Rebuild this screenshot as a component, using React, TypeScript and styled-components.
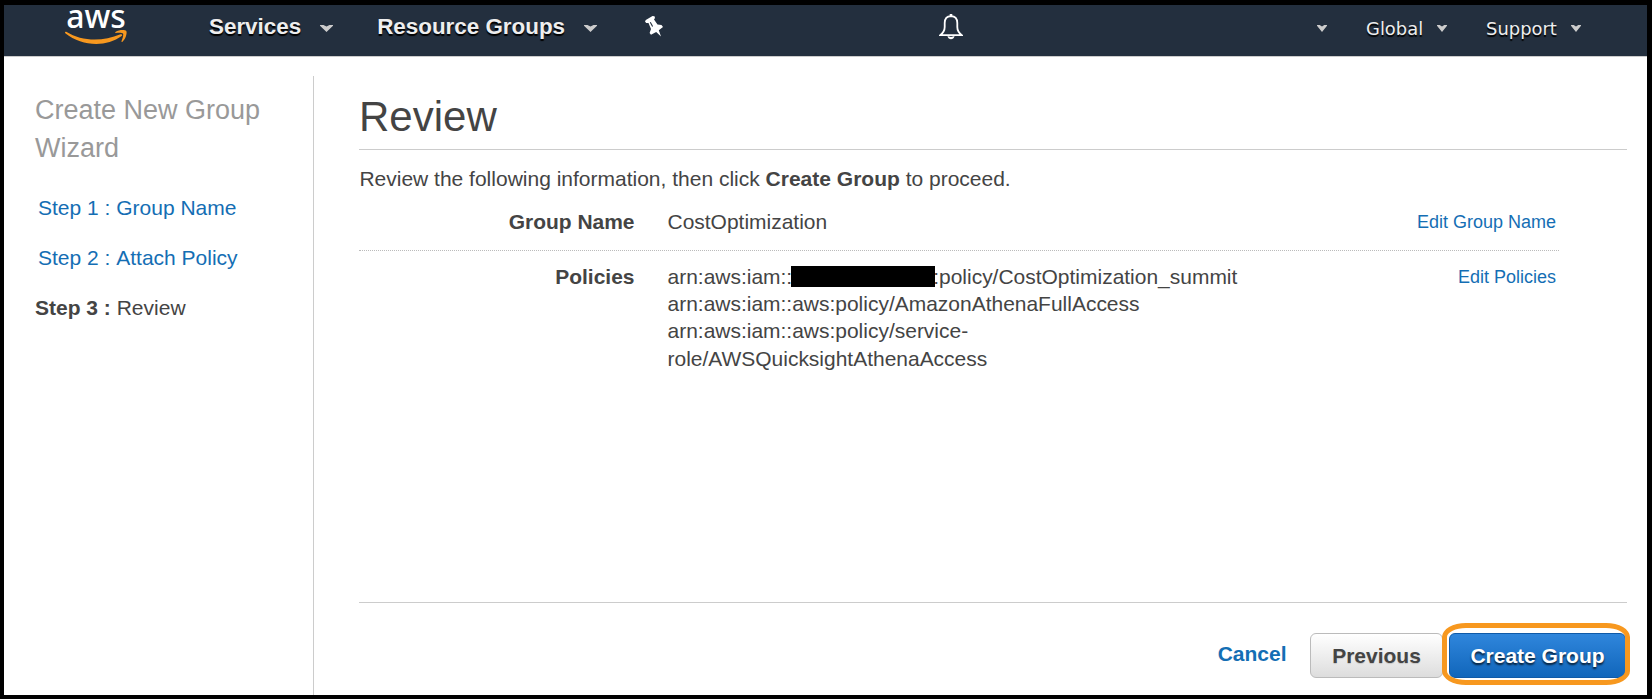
import React from 'react';
import styled, { createGlobalStyle } from 'styled-components';

const Global = createGlobalStyle`
  * { box-sizing: border-box; }
  body { margin: 0; background: #fff; color: #444; font-family: "Liberation Sans", Arial, sans-serif; }
  h1, h2, p, ul { margin: 0; padding: 0; font-weight: normal; }
  ul { list-style: none; }
`;

const Window = styled.div`
  width: 1652px;
  height: 699px;
  border: solid #000;
  border-width: 5px 5px 4px 4px;
  display: flex;
  flex-direction: column;
  background: #fff;
`;

const NavBar = styled.header`
  height: 52px;
  flex: none;
  display: flex;
  align-items: flex-start;
  background: #232f3e;
  border-bottom: 1px solid #ccc;
`;

const Logo = styled.div`
  width: 64px;
  height: 40px;
  margin-left: 60px;
  display: flex;
  flex-direction: column;
  align-items: center;
`;

const LogoText = styled.span`
  height: 25px;
  font: 500 32px/21px "Noto Sans", sans-serif;
  color: #fff;
  white-space: nowrap;
`;

const Smile = styled.svg`
  display: block;
  width: 64px;
  height: 15px;
`;

const NavItem = styled.a<{ $gap: number }>`
  display: flex;
  margin-left: ${(p) => p.$gap}px;
  font-size: 22.4px;
  font-weight: bold;
  line-height: 43px;
  color: #eee;
  text-shadow: 0 2px 1px #000;
  white-space: nowrap;
`;

const MetaItem = styled(NavItem)`
  font-family: "DejaVu Sans", sans-serif;
  font-weight: normal;
  font-size: 17.9px;
  line-height: 47px;
`;

const Caret = styled.svg<{ $w: number; $gap: number }>`
  width: ${(p) => p.$w}px;
  height: 7px;
  margin: 20px 0 0 ${(p) => p.$gap}px;
  fill: #ccc;
`;

const NavIcon = styled.svg<{ $gap: number; $top: number }>`
  flex: none;
  margin: ${(p) => p.$top}px 0 0 ${(p) => p.$gap}px;
`;

const Body = styled.div`
  flex: 1;
  display: flex;
  padding-top: 19px;
`;

const Sidebar = styled.aside`
  width: 310px;
  border-right: 1px solid #ccc;
  padding: 15px 0 0 31px;
`;

const WizardTitle = styled.h2`
  width: 240px;
  font-size: 27px;
  line-height: 38px;
  color: #999;
`;

const Steps = styled.ul`
  margin-top: 16px;
`;

const Step = styled.li<{ $active?: boolean }>`
  height: 50px;
  padding-left: ${(p) => (p.$active ? 0 : 3)}px;
  font-size: 21px;
  font-kerning: none;
  line-height: 50px;
  color: ${(p) => (p.$active ? '#444' : '#146eb4')};
`;

const Main = styled.main`
  width: 1268px;
  margin-left: 45px;
  display: flex;
  flex-direction: column;
`;

const Title = styled.h1`
  height: 74px;
  border-bottom: 1px solid #ccc;
  font-size: 42px;
  line-height: 81px;
`;

const Intro = styled.p`
  height: 50px;
  padding-left: 0.4px;
  font-size: 21px;
  line-height: 57px;
`;

const Row = styled.div<{ $line?: boolean }>`
  width: 1200px;
  display: flex;
  padding: ${(p) => (p.$line ? '8px 3px 15.3px 0' : '12px 3px 0 0')};
  border-bottom: ${(p) => (p.$line ? '1px dotted #bbb' : '0')};
  font-size: 20.98px;
  line-height: 27px;
`;

const Label = styled.div`
  width: 275.5px;
  text-align: right;
  font-weight: bold;
`;

const Value = styled.div`
  flex: 1;
  padding-left: 33px;
`;

const Line = styled.div`
  display: flex;
  white-space: nowrap;

  &:nth-child(4) {
    padding-top: 1px;
  }
`;

const Redacted = styled.span`
  width: 144px;
  height: 21px;
  margin: 3px 0 0 -1px;
  background: #000;
  position: relative;
`;

const AfterRedacted = styled.span`
  margin-left: -2px;
`;

const EditLink = styled.a`
  height: 27px;
  font-size: 18px;
  line-height: 28px;
  color: #146eb4;
`;

const Footer = styled.footer`
  margin-top: auto;
  height: 93px;
  border-top: 1px solid #ccc;
  display: flex;
  justify-content: flex-end;
  padding: 30px 1px 0 0;
`;

const Cancel = styled.a`
  margin-right: 23.5px;
  font-size: 21px;
  font-weight: bold;
  line-height: 41px;
  color: #146eb4;
`;

const Button = styled.button<{ $primary?: boolean }>`
  width: ${(p) => (p.$primary ? 177 : 133)}px;
  height: 45px;
  padding: 0;
  border: 1px solid ${(p) => (p.$primary ? '#0f5aa8' : '#bbb')};
  border-radius: 6px;
  background: ${(p) => (p.$primary ? 'linear-gradient(#2f86dc, #1166bb)' : 'linear-gradient(#fff, #ddd)')};
  color: ${(p) => (p.$primary ? '#fff' : '#444')};
  text-shadow: ${(p) => (p.$primary ? '0 2px 2px rgba(0,0,0,.75)' : '0 1px 1px rgba(0,0,0,.15)')};
  font: bold 21px/43px "Liberation Sans", Arial, sans-serif;
`;

const Highlight = styled.div`
  position: relative;
  margin-left: 6px;
`;

const Ring = styled.span`
  position: absolute;
  left: -7px;
  top: -10px;
  width: 188px;
  height: 62px;
  border: 5px solid #f7981f;
  border-radius: 24px / 14px;
`;

const CaretIcon = ({ w, gap }: { w: number; gap: number }) => (
  <Caret $w={w} $gap={gap} viewBox="0 0 13 7" preserveAspectRatio="none">
    <path d="M0 0 H3.5 L6.5 1.6 L9.5 0 H13 V.8 L6.5 7 L0 .8 Z" />
  </Caret>
);

export default function App() {
  return (
    <Window>
      <Global />
      <NavBar>
        <Logo>
          <LogoText>aws</LogoText>
          <Smile viewBox="0 0 64 15" fill="#f7981f">
            <path d="M2.2 1.8 C18 11.5 38 12 56.5 4.3 C58 3.8 58.8 5 57.7 6 C42 17.5 18 16.5 1.3 3.2 C.6 2.2 1.2 1.3 2.2 1.8 Z" />
            <path d="M51.5 1.9 C55 -.3 61 -.3 62.3 1 C63.4 3 61.5 9.5 58.5 11.8 C57.8 12.3 57.2 12 57.5 11.2 C58.5 8.5 59.8 4.6 59 3.5 C58.2 2.5 54.5 2.6 52 2.9 C51 3 50.8 2.4 51.5 1.9 Z" />
          </Smile>
        </Logo>
        <NavItem $gap={81}>Services<CaretIcon w={13} gap={19} /></NavItem>
        <NavItem $gap={44}>Resource Groups<CaretIcon w={13} gap={19} /></NavItem>
        <NavIcon $gap={48} $top={11} width="18" height="21" viewBox="0 0 18 21" fill="#fff">
          <path d="M0 5.5 L.8 4 L7.5 0 L9.5 .3 L10 2 L9 3.5 L12.5 8.5 L16.5 9 L18 11 L13.8 14.2 L16 20.5 L11.2 16 L6 18.8 L4.6 17 L6 13 L3.5 7 L1.2 7 Z" />
          <path d="M5.3 6.2 L7.6 10.6" stroke="#232f3e" strokeWidth="1.1" />
        </NavIcon>
        <NavIcon $gap={276} $top={9} width="24" height="26" viewBox="0 0 24 26" fill="none" stroke="#fff" strokeWidth="1.8">
          <path d="M12 2.2 C7.5 2.4 5.7 5.5 5.7 9 V13 C5.7 17 3.5 19.5 1.2 21.2 H22.8 C20.5 19.5 18.3 17 18.3 13 V9 C18.3 5.5 16.5 2.4 12 2.2 Z" />
          <path d="M12 0 V2.4" strokeWidth="2.6" />
          <path d="M8.5 22 C9.2 26.4 14.8 26.4 15.5 22 L12 23 Z" fill="#fff" stroke="none" />
        </NavIcon>
        <MetaItem $gap={354}><CaretIcon w={10} gap={0} /></MetaItem>
        <MetaItem $gap={39}>Global<CaretIcon w={10} gap={14} /></MetaItem>
        <MetaItem $gap={39}>Support<CaretIcon w={10} gap={14} /></MetaItem>
      </NavBar>
      <Body>
        <Sidebar>
          <WizardTitle>Create New Group Wizard</WizardTitle>
          <Steps>
            <Step>Step 1 : Group Name</Step>
            <Step>Step 2 : Attach Policy</Step>
            <Step $active><b>Step 3 :</b> Review</Step>
          </Steps>
        </Sidebar>
        <Main>
          <Title>Review</Title>
          <Intro>Review the following information, then click <b>Create Group</b> to proceed.</Intro>
          <Row $line>
            <Label>Group Name</Label>
            <Value>CostOptimization</Value>
            <EditLink>Edit Group Name</EditLink>
          </Row>
          <Row>
            <Label>Policies</Label>
            <Value>
              <Line>arn:aws:iam::<Redacted /><AfterRedacted>:policy/CostOptimization_summit</AfterRedacted></Line>
              <Line>arn:aws:iam::aws:policy/AmazonAthenaFullAccess</Line>
              <Line>arn:aws:iam::aws:policy/service-</Line>
              <Line>role/AWSQuicksightAthenaAccess</Line>
            </Value>
            <EditLink>Edit Policies</EditLink>
          </Row>
          <Footer>
            <Cancel>Cancel</Cancel>
            <Button>Previous</Button>
            <Highlight>
              <Button $primary>Create Group</Button>
              <Ring />
            </Highlight>
          </Footer>
        </Main>
      </Body>
    </Window>
  );
}
